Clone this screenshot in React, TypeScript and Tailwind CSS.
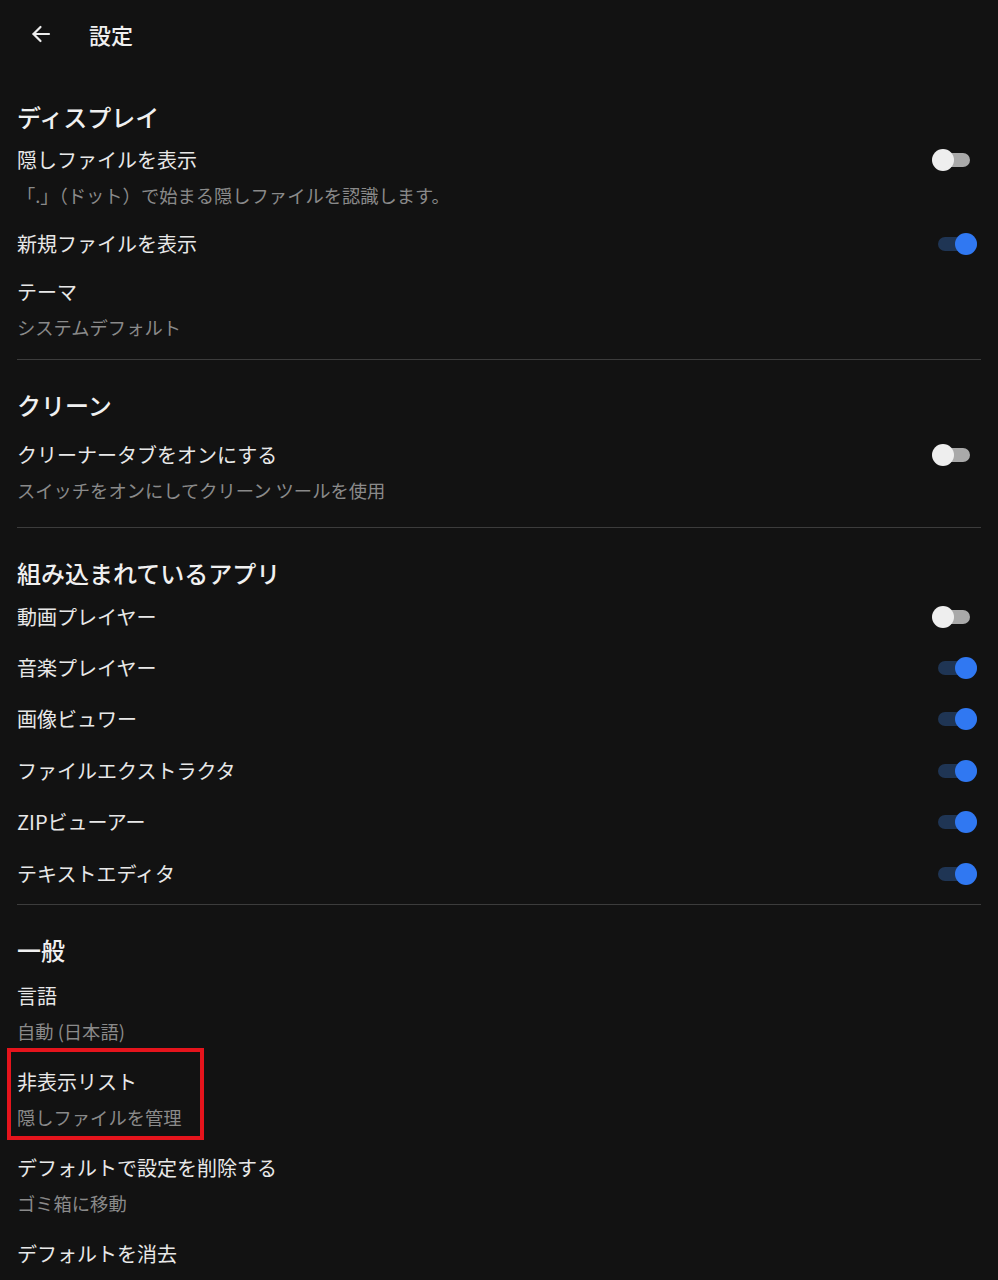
import React from "react";

const Toggle = ({ on }: { on: boolean }) => (
  <div className="relative w-[45px] h-[24px] shrink-0 mr-[4px] mt-[2px]">
    {on ? (
      <>
        <div className="absolute left-[6px] top-[5px] w-[39px] h-[14px] rounded-full bg-[#1f3554]" />
        <div className="absolute left-[23px] top-[1px] w-[22px] h-[22px] rounded-full bg-[#3078f2]" />
      </>
    ) : (
      <>
        <div className="absolute left-[4px] top-[5px] w-[34px] h-[14px] rounded-full bg-[#a9a9a9]" />
        <div className="absolute left-0 top-[1px] w-[22px] h-[22px] rounded-full bg-[#eeeeee]" />
      </>
    )}
  </div>
);

const Item = ({
  title,
  sub,
  toggle,
  pad = "py-3",
  children,
}: {
  title: string;
  sub?: string;
  toggle?: boolean;
  pad?: string;
  children?: React.ReactNode;
}) => (
  <div className={`relative flex items-start justify-between ${pad}`}>
    <div className="flex flex-col">
      <div className="text-[20px] leading-[28px] text-[#e8e8e8]">{title}</div>
      {sub && <div className="mt-[8px] text-[18.3px] leading-[26px] text-[#8a8a8a]">{sub}</div>}
    </div>
    {toggle !== undefined && <Toggle on={toggle} />}
    {children}
  </div>
);

const Heading = ({ children, mt }: { children: React.ReactNode; mt: string }) => (
  <div className={`${mt} text-[24px] leading-[32px] font-medium text-[#f0f0f0]`}>{children}</div>
);

const Divider = ({ mt }: { mt: string }) => <div className={`${mt} h-px bg-[#3c3c3c]`} />;

export default function App() {
  return (
    <div
      className="min-h-[1280px] w-full bg-[#121212] overflow-hidden"
      style={{ fontFamily: '"Noto Sans CJK JP", "Noto Sans", sans-serif' }}
    >
      <div className="h-[72px] flex items-center pl-[31px] pb-[4px]">
        <svg width="20" height="18" viewBox="0 0 20 18" fill="none" stroke="#ececec" strokeWidth="2.2" strokeLinecap="round" strokeLinejoin="round">
          <path d="M18 9H2.5" />
          <path d="M9.5 2L2.5 9l7 7" />
        </svg>
        <div className="ml-[38px] text-[22px] leading-[30px] font-medium text-[#f0f0f0]">設定</div>
      </div>

      <div className="px-[17px]">
        <Heading mt="mt-[29px]">ディスプレイ</Heading>
        <div className="mt-px">
          <Item title="隠しファイルを表示" sub="「.」（ドット）で始まる隠しファイルを認識します。" toggle={false} />
          <Item title="新規ファイルを表示" toggle={true} pad="py-[10px]" />
          <Item title="テーマ" sub="システムデフォルト" pad="py-[10px]" />
        </div>
        <Divider mt="mt-[9px]" />

        <Heading mt="mt-[29px]">クリーン</Heading>
        <div className="mt-[8px]">
          <Item title="クリーナータブをオンにする" sub="スイッチをオンにしてクリーン ツールを使用" toggle={false} />
        </div>
        <Divider mt="mt-[12px]" />

        <Heading mt="mt-[29px]">組み込まれているアプリ</Heading>
        <div className="mt-[2px]">
          <Item title="動画プレイヤー" toggle={false} pad="py-[11.7px]" />
          <Item title="音楽プレイヤー" toggle={true} pad="py-[11.7px]" />
          <Item title="画像ビュワー" toggle={true} pad="py-[11.7px]" />
          <Item title="ファイルエクストラクタ" toggle={true} pad="py-[11.7px]" />
          <Item title="ZIPビューアー" toggle={true} pad="py-[11.7px]" />
          <Item title="テキストエディタ" toggle={true} pad="py-[11.7px]" />
        </div>
        <Divider mt="mt-[5px]" />

        <Heading mt="mt-[29px]">一般</Heading>
        <div className="mt-[4px]">
          <Item title="言語" sub="自動 (日本語)" />
          <Item title="非表示リスト" sub="隠しファイルを管理">
            <div className="absolute left-[-10px] top-[-8px] w-[197px] h-[92px] border-[4px] border-[#e5141c] pointer-events-none" />
          </Item>
          <Item title="デフォルトで設定を削除する" sub="ゴミ箱に移動" />
          <Item title="デフォルトを消去" />
        </div>
      </div>
    </div>
  );
}
